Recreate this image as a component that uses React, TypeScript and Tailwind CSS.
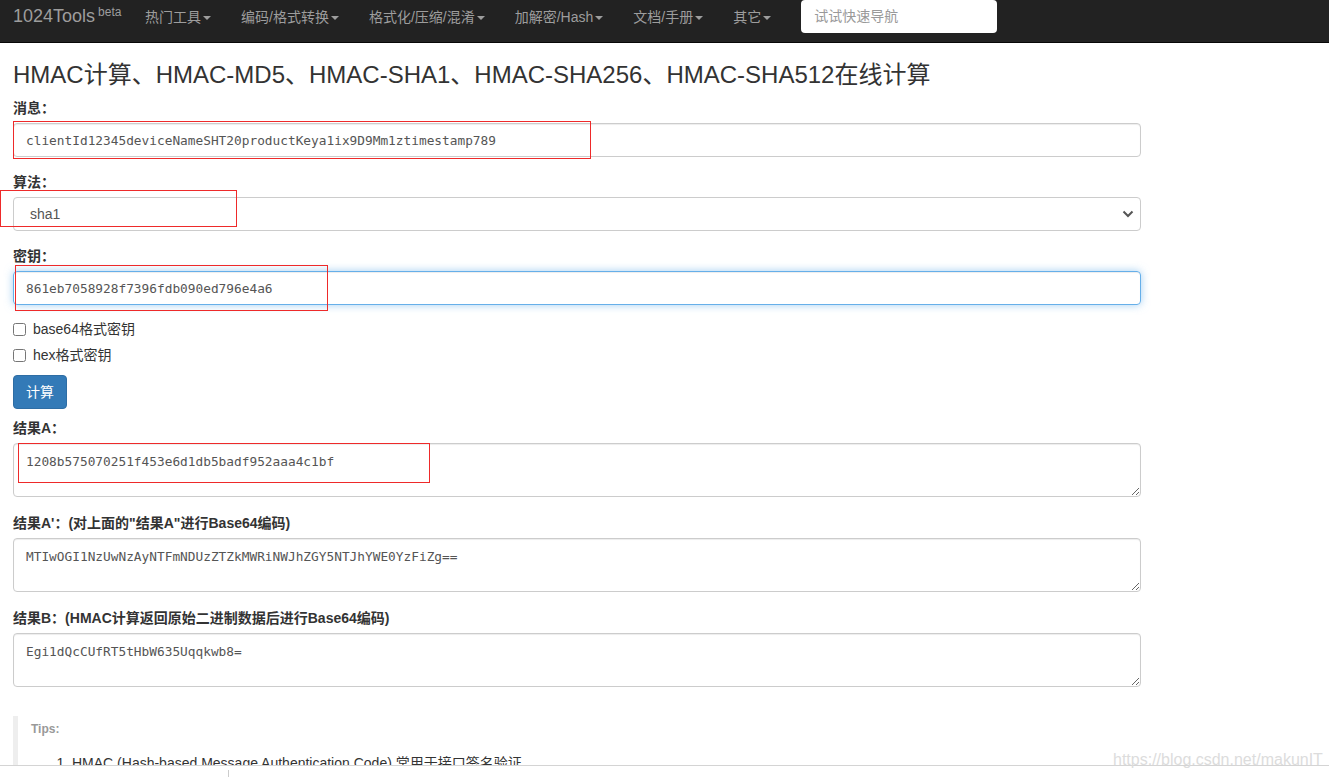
import React from "react";

const sans = "font-['Liberation_Sans','Noto_Sans_CJK_SC',sans-serif]";
const mono = "font-['DejaVu_Sans_Mono','Noto_Sans_CJK_SC',monospace]";

const navItems = ["热门工具", "编码/格式转换", "格式化/压缩/混淆", "加解密/Hash", "文档/手册", "其它"];

function Caret() {
  return (
    <span className="ml-[2px] inline-block h-0 w-0 border-x-[4px] border-t-[4px] border-x-transparent border-t-[#9d9d9d] align-middle" />
  );
}

function Label({ children }: { children: React.ReactNode }) {
  return <div className="mb-[5px] h-[20px] text-[14px] font-bold leading-[20px] text-[#333]">{children}</div>;
}

function Mark({ className }: { className: string }) {
  return <div className={`pointer-events-none absolute border border-[#ee2a2a] ${className}`} />;
}

function Result({ value }: { value: string }) {
  return (
    <textarea
      readOnly
      rows={2}
      value={value}
      className={`${mono} block h-[54px] w-[1128px] rounded-[4px] border border-[#ccc] px-[12px] pb-[6px] pt-[8px] text-[12.8px] leading-[20px] text-[#555] shadow-[inset_0_1px_1px_rgba(0,0,0,0.075)] outline-none`}
    />
  );
}

export default function App() {
  return (
    <div className={`${sans} relative h-[777px] w-[1329px] overflow-hidden bg-white text-[#333]`}>
      {/* navbar */}
      <nav className="flex h-[43px] items-start border-b border-[#080808] bg-[#222]">
        <div className="w-[130px] pl-[13px] pt-[6px] text-[18px] leading-[20px] text-[#9d9d9d]">
          1024Tools<sup className="ml-[3px] text-[12px]">beta</sup>
        </div>
        {navItems.map((n) => (
          <div key={n} className="px-[15px] pt-[7px] text-[14px] leading-[20px] text-[#9d9d9d]">
            {n}
            <Caret />
          </div>
        ))}
        <div className="ml-[15px] flex h-[33px] w-[196px] items-center rounded-[4px] bg-white px-[13px] text-[14px] text-[#999]">
          试试快速导航
        </div>
      </nav>

      <main className="h-[722px] overflow-hidden px-[13px]">
        <h1 className="mt-[19px] text-[24px] font-normal leading-[26px] text-[#333]">
          HMAC计算、HMAC-MD5、HMAC-SHA1、HMAC-SHA256、HMAC-SHA512在线计算
        </h1>

        <div className="mt-[10px]">
          <Label>消息：</Label>
          <div className="relative">
            <div className={`${mono} flex h-[34px] w-[1128px] items-center rounded-[4px] border border-[#ccc] px-[12px] pt-[1px] text-[12.8px] text-[#555] shadow-[inset_0_1px_1px_rgba(0,0,0,0.075)]`}>
              clientId12345deviceNameSHT20productKeya1ix9D9Mm1ztimestamp789
            </div>
            <Mark className="left-0 top-[-2px] h-[38px] w-[578px]" />
          </div>
        </div>

        <div className="mt-[15px]">
          <Label>算法：</Label>
          <div className="relative">
            <div className="flex h-[34px] w-[1128px] items-center justify-between rounded-[4px] border border-[#ccc] pl-[16px] pr-[6px] text-[14px] text-[#555]">
              <span>sha1</span>
              <svg width="12" height="8" viewBox="0 0 12 8">
                <path d="M1.5 1.5 L6 6 L10.5 1.5" fill="none" stroke="#555" strokeWidth="2" />
              </svg>
            </div>
            <Mark className="left-[-13px] top-[-7px] h-[37px] w-[237px]" />
          </div>
        </div>

        <div className="mt-[15px]">
          <Label>密钥：</Label>
          <div className="relative">
            <div className={`${mono} flex h-[34px] w-[1128px] items-center rounded-[4px] border border-[#66afe9] px-[12px] pt-[1px] text-[12.8px] text-[#555] shadow-[inset_0_1px_1px_rgba(0,0,0,0.075),0_0_8px_rgba(102,175,233,0.6)]`}>
              861eb7058928f7396fdb090ed796e4a6
            </div>
            <Mark className="left-[2px] top-[-6px] h-[46px] w-[313px]" />
          </div>
        </div>

        <div className="mt-[14px] flex flex-col gap-[6px] text-[14px] leading-[20px]">
          <label className="flex items-center gap-[7px]">
            <input type="checkbox" className="m-0 h-[13px] w-[13px]" />
            base64格式密钥
          </label>
          <label className="flex items-center gap-[7px]">
            <input type="checkbox" className="m-0 h-[13px] w-[13px]" />
            hex格式密钥
          </label>
        </div>

        <button className="mt-[10px] h-[34px] rounded-[4px] border border-[#2e6da4] bg-[#337ab7] px-[12px] text-[14px] text-white">
          计算
        </button>

        <div className="mt-[9px]">
          <Label>结果A：</Label>
          <div className="relative">
            <Result value="1208b575070251f453e6d1db5badf952aaa4c1bf" />
            <Mark className="left-[5px] top-0 h-[40px] w-[412px]" />
          </div>
        </div>

        <div className="mt-[16px]">
          <Label>结果A'：(对上面的"结果A"进行Base64编码)</Label>
          <Result value="MTIwOGI1NzUwNzAyNTFmNDUzZTZkMWRiNWJhZGY5NTJhYWE0YzFiZg==" />
        </div>

        <div className="mt-[16px]">
          <Label>结果B：(HMAC计算返回原始二进制数据后进行Base64编码)</Label>
          <Result value="Egi1dQcCUfRT5tHbW635Uqqkwb8=" />
        </div>

        <blockquote className="mt-[29px] border-l-[5px] border-[#eee] pl-[13px] pt-[3px]">
          <div className="text-[12px] font-bold leading-[20px] text-[#999]">Tips:</div>
          <ol className="mt-[14px] list-decimal pl-[41px] text-[14px] leading-[20px] text-[#333]">
            <li>HMAC (Hash-based Message Authentication Code) 常用于接口签名验证</li>
          </ol>
        </blockquote>
      </main>

      {/* bottom strip */}
      <div className="relative h-[12px] border-t border-[#d4d4d4] bg-white">
        <div className="absolute left-[228px] top-[4px] h-[8px] w-px bg-[#ccc]" />
      </div>

      <div className="pointer-events-none absolute left-[1113px] top-[750px] text-[16px] leading-[20px] text-[#dcdcdc]">
        https://blog.csdn.net/makunIT
      </div>
    </div>
  );
}
